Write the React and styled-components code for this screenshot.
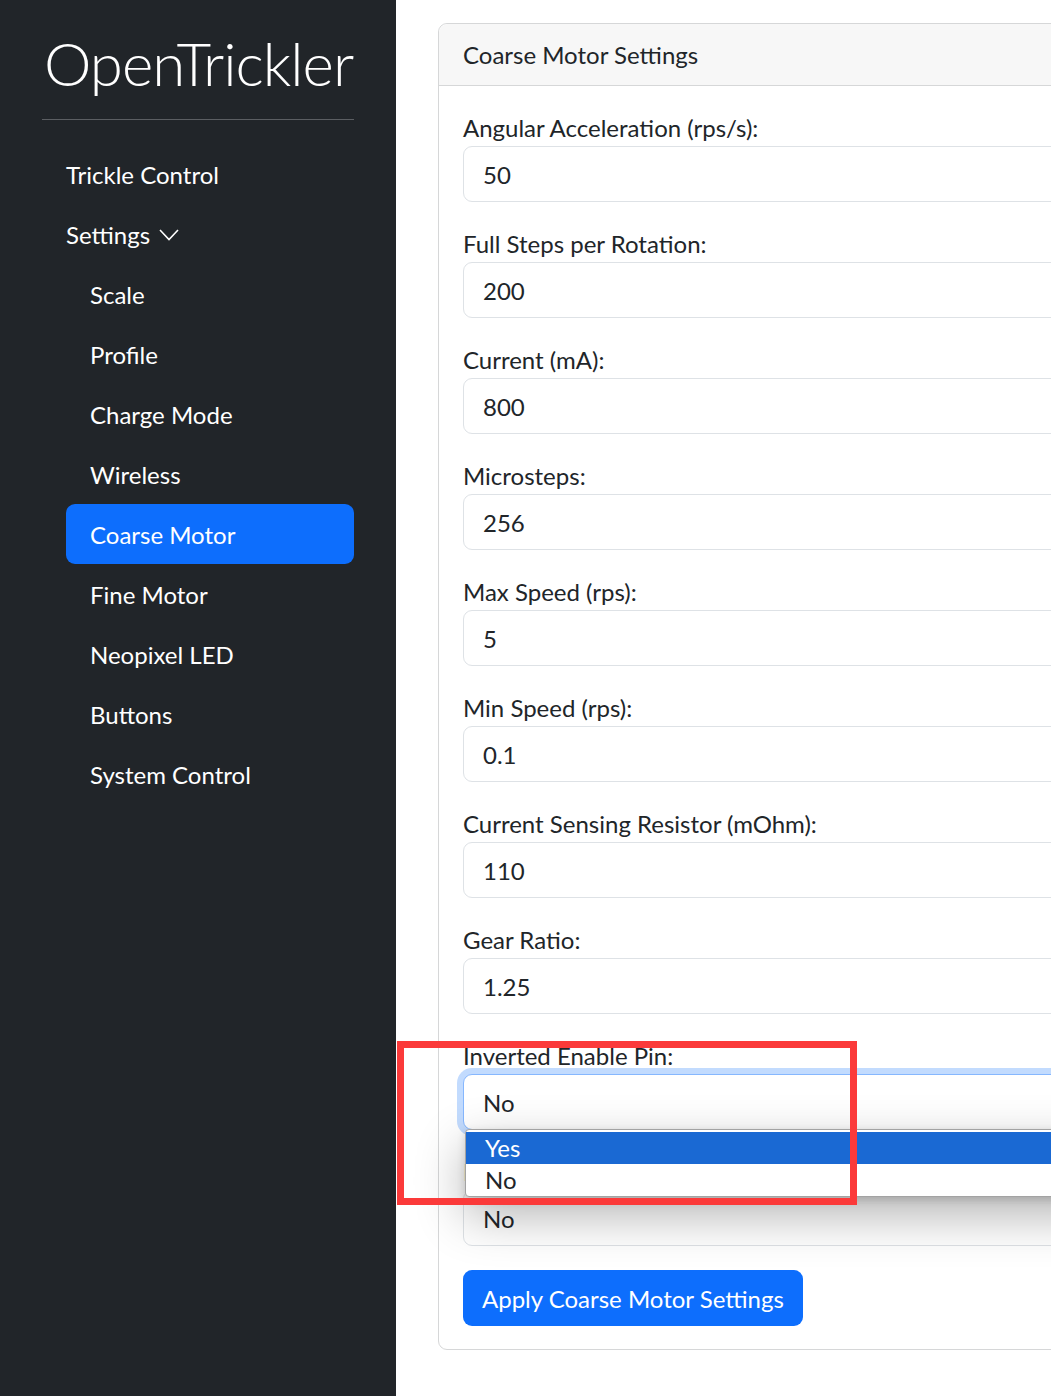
import React from 'react';
import styled, { createGlobalStyle } from 'styled-components';

const GlobalStyle = createGlobalStyle`
  html, body {
    margin: 0;
    padding: 0;
    background: #fff;
    overflow: hidden;
  }
  body {
    font-family: Lato, "Noto Sans", sans-serif;
    font-size: 24px;
    color: #212529;
  }
  * { box-sizing: border-box; }
`;

const Page = styled.div`
  position: relative;
  display: flex;
  width: 1051px;
  height: 1396px;
  overflow: hidden;
`;

const Sidebar = styled.aside`
  flex: 0 0 396px;
  width: 396px;
  min-width: 0;
  background: #212529;
  padding: 23px 42px 0;
  display: flex;
  flex-direction: column;
`;

const Logo = styled.div`
  color: #fff;
  font-weight: 300;
  font-size: 60px;
  line-height: 80px;
  padding-left: 2px;
  letter-spacing: -1px;
  white-space: nowrap;
`;

const Rule = styled.hr`
  border: 0;
  border-top: 1px solid #5b5e62;
  margin: 16px 0 24px;
`;

const NavList = styled.ul`
  list-style: none;
  margin: 0;
  padding: 0 0 0 ${p => (p.$sub ? '24px' : '0')};
`;

const NavLink = styled.a`
  display: flex;
  align-items: center;
  height: 60px;
  padding: 0 24px;
  border-radius: 9px;
  color: #fff;
  text-decoration: none;
  background: ${p => (p.$active ? '#0d6efd' : 'transparent')};
  svg {
    margin-left: 9px;
    margin-top: 2px;
  }
`;

const Main = styled.main`
  flex: 1;
  padding: 23px 0 0 42px;
  min-width: 0;
`;

const Card = styled.section`
  width: 1000px;
  border: 1px solid #d6d7d8;
  border-radius: 9px;
  background: #fff;
`;

const CardHeader = styled.div`
  height: 62px;
  display: flex;
  align-items: center;
  padding: 0 24px;
  background: #f7f7f7;
  border-bottom: 1px solid #d6d7d8;
  border-radius: 9px 9px 0 0;
`;

const CardBody = styled.div`
  padding: 24px 24px 23px;
`;

const Field = styled.div`
  position: relative;
  margin-bottom: 24px;
`;

const Label = styled.label`
  display: block;
  line-height: 36px;
`;

const Control = styled.div`
  height: 56px;
  display: flex;
  align-items: center;
  padding: 0 19px;
  border: 1px solid ${p => (p.$focus ? '#86b7fe' : '#dee2e6')};
  border-radius: 9px;
  background: #fff;
  box-shadow: ${p => (p.$focus ? '0 0 0 6px rgba(13, 110, 253, 0.25)' : 'none')};
`;

const Popup = styled.ul`
  position: absolute;
  left: 2px;
  top: 91px;
  width: 700px;
  margin: 0;
  padding: 2px 0 0;
  list-style: none;
  background: #fff;
  border: 1px solid #a3a3a3;
  border-radius: 4px;
  box-shadow: 0 18px 50px rgba(0, 0, 0, 0.3), 0 3px 8px rgba(0, 0, 0, 0.15);
  z-index: 2;
`;

const Option = styled.li`
  height: 32px;
  line-height: 32px;
  padding-left: 19px;
  color: ${p => (p.$selected ? '#fff' : '#212529')};
  background: ${p => (p.$selected ? '#1a69d3' : 'transparent')};
`;

const Button = styled.button`
  font: inherit;
  color: #fff;
  background: #0d6efd;
  border: 0;
  border-radius: 9px;
  height: 56px;
  padding: 0 19px;
`;

const Annotation = styled.div`
  position: absolute;
  left: 397px;
  top: 1041px;
  width: 460px;
  height: 164px;
  border: 7px solid #fb3a3a;
  z-index: 3;
  pointer-events: none;
`;

const Chevron = () => (
  <svg width="20" height="12" viewBox="0 0 20 12" fill="none">
    <polyline points="1,1 10,10.5 19,1" stroke="#fff" strokeWidth="1.6" />
  </svg>
);

const fields = [
  ['Angular Acceleration (rps/s):', '50'],
  ['Full Steps per Rotation:', '200'],
  ['Current (mA):', '800'],
  ['Microsteps:', '256'],
  ['Max Speed (rps):', '5'],
  ['Min Speed (rps):', '0.1'],
  ['Current Sensing Resistor (mOhm):', '110'],
  ['Gear Ratio:', '1.25'],
];

const subItems = ['Scale', 'Profile', 'Charge Mode', 'Wireless', 'Coarse Motor', 'Fine Motor', 'Neopixel LED', 'Buttons', 'System Control'];

export default function App() {
  return (
    <Page>
      <GlobalStyle />
      <Sidebar>
        <Logo>OpenTrickler</Logo>
        <Rule />
        <NavList>
          <li><NavLink>Trickle Control</NavLink></li>
          <li><NavLink>Settings <Chevron /></NavLink></li>
          <li>
            <NavList $sub>
              {subItems.map(item => (
                <li key={item}>
                  <NavLink $active={item === 'Coarse Motor'}>{item}</NavLink>
                </li>
              ))}
            </NavList>
          </li>
        </NavList>
      </Sidebar>

      <Main>
        <Card>
          <CardHeader>Coarse Motor Settings</CardHeader>
          <CardBody>
            {fields.map(([label, value]) => (
              <Field key={label}>
                <Label>{label}</Label>
                <Control>{value}</Control>
              </Field>
            ))}
            <Field>
              <Label>Inverted Enable Pin:</Label>
              <Control $focus>No</Control>
              <Popup>
                <Option $selected>Yes</Option>
                <Option>No</Option>
              </Popup>
            </Field>
            <Field>
              <Label>Inverted Direction:</Label>
              <Control>No</Control>
            </Field>
            <Button>Apply Coarse Motor Settings</Button>
          </CardBody>
        </Card>
      </Main>

      <Annotation />
    </Page>
  );
}
